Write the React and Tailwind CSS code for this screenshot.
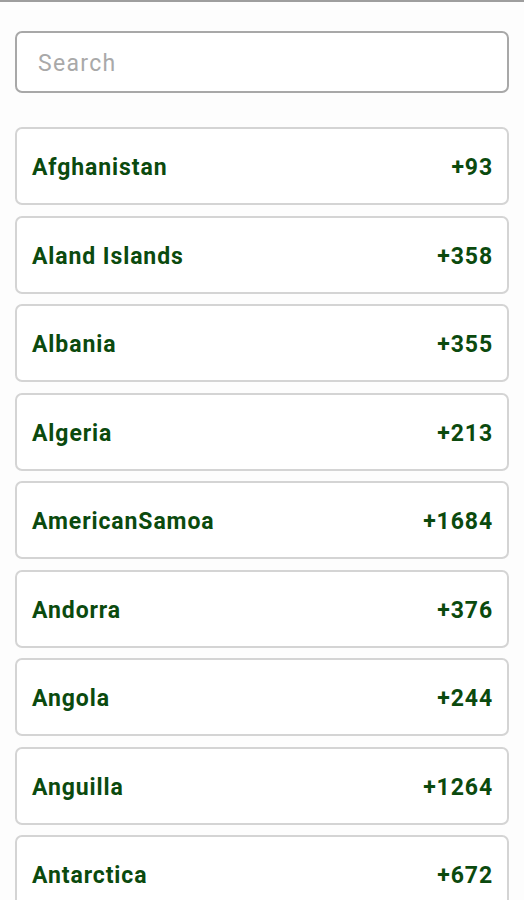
import React, { useState } from 'react';

const countries = [
    { name: 'Afghanistan', code: '+93' },
    { name: 'Aland Islands', code: '+358' },
    { name: 'Albania', code: '+355' },
    { name: 'Algeria', code: '+213' },
    { name: 'AmericanSamoa', code: '+1684' },
    { name: 'Andorra', code: '+376' },
    { name: 'Angola', code: '+244' },
    { name: 'Anguilla', code: '+1264' },
    { name: 'Antarctica', code: '+672' },
];

function App() {
    const [query, setQuery] = useState('');

    const filtered = countries.filter(c => c.name.toLowerCase().includes(query.toLowerCase()));

    return (
        <div className="h-[900px] overflow-hidden bg-[#fdfdfd] border-t-2 border-[#9e9e9e]" style={{ fontFamily: 'Roboto, "Noto Sans", sans-serif' }}>
            <div className="px-[15px] pt-[29px]">
                <input
                    type="text"
                    value={query}
                    onChange={e => setQuery(e.target.value)}
                    placeholder="Search"
                    className="w-full h-[62px] rounded-[7px] border-2 border-[#a8a8a8] bg-white px-[21px] pt-[2px] text-[23px] tracking-[1.3px] text-[#333] placeholder:text-[#a9a9a9] outline-none"
                />

                <div className="mt-[34px] flex flex-col gap-[10.5px]">
                    {filtered.map(c => (
                        <div
                            key={c.name}
                            className="h-[78px] shrink-0 flex items-center justify-between rounded-[7px] border-2 border-[#d4d4d4] bg-white pl-[15px] pr-[14px] pt-[5px] text-[23px] tracking-[0.9px] font-bold text-[#0b4a0e]"
                        >
                            <span>{c.name}</span>
                            <span>{c.code}</span>
                        </div>
                    ))}
                </div>
            </div>
        </div>
    );
}

export default App;
